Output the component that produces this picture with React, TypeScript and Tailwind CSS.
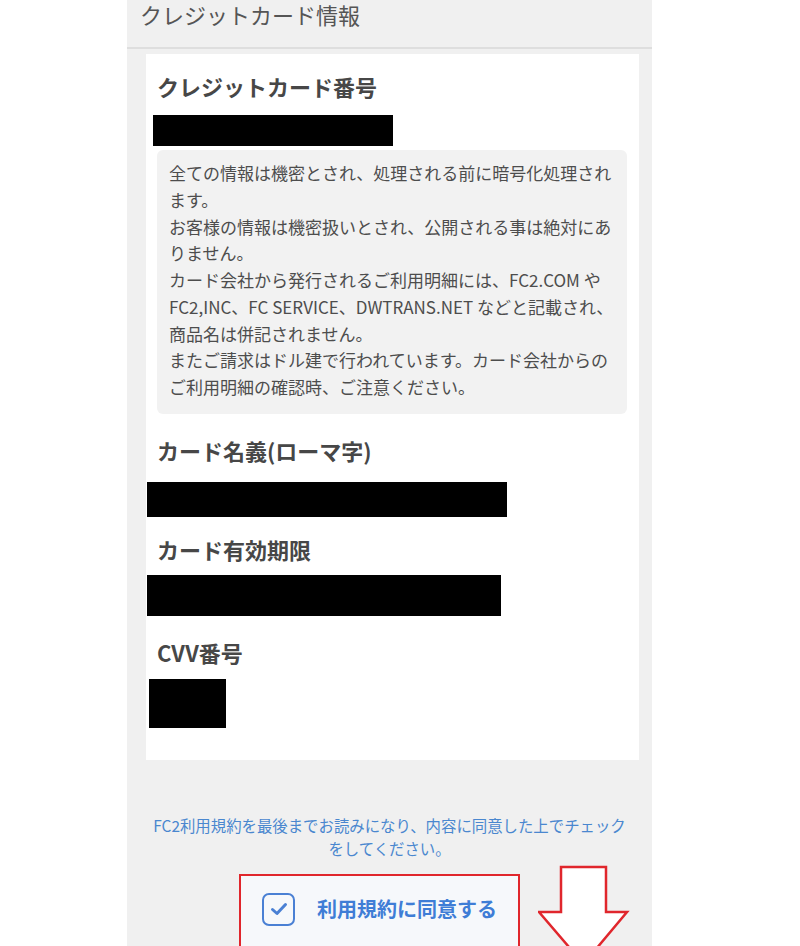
import React from "react";

const FONT = { fontFamily: '"Noto Sans CJK JP", "Noto Sans", sans-serif' };

// redaction bar shown in place of entered card details
function Redacted({ className }: { className: string }) {
  return <div className={`bg-black ${className}`} />;
}

function FieldLabel({ children, className = "" }: { children: React.ReactNode; className?: string }) {
  return (
    <h3 className={`pl-[11px] text-[22px] font-bold leading-[30px] text-[#474747] ${className}`}>
      {children}
    </h3>
  );
}

export default function App() {
  return (
    <div className="relative h-[946px] overflow-hidden bg-white" style={FONT}>
      <div className="ml-[127px] h-full w-[525px] bg-[#f0f0f0]">
        {/* Section header */}
        <div className="h-[49px] border-b-2 border-[#dedede] pl-[13px] text-[22px] leading-[29px] text-[#555]">
          クレジットカード情報
        </div>

        {/* Card form */}
        <div className="ml-[19px] mt-[5px] w-[493px] bg-white pb-[32px] pt-[17px]">
          <FieldLabel>クレジットカード番号</FieldLabel>
          <Redacted className="ml-[7px] mt-[14px] h-[31px] w-[240px]" />

          <div className="ml-[11px] mt-[4px] w-[470px] rounded-md bg-[#f2f2f2] pb-[13px] pl-[12px] pr-[8px] pt-[10px] text-[17px] leading-[26.75px] text-[#4d4d4d]">
            全ての情報は機密とされ、処理される前に暗号化処理されます。
            <br />
            お客様の情報は機密扱いとされ、公開される事は絶対にありません。
            <br />
            カード会社から発行されるご利用明細には、FC2.COM や FC2,INC、FC SERVICE、DWTRANS.NET などと記載され、商品名は併記されません。
            <br />
            またご請求はドル建で行われています。カード会社からのご利用明細の確認時、ご注意ください。
          </div>

          <FieldLabel className="mt-[21px]">カード名義(ローマ字)</FieldLabel>
          <Redacted className="ml-[1px] mt-[17px] h-[35px] w-[360px]" />

          <FieldLabel className="mt-[17px]">カード有効期限</FieldLabel>
          <Redacted className="ml-[1px] mt-[11px] h-[41px] w-[354px]" />

          <FieldLabel className="mt-[21px]">CVV番号</FieldLabel>
          <Redacted className="ml-[3px] mt-[12px] h-[49px] w-[77px]" />
        </div>

        {/* Terms agreement */}
        <p className="mt-[54px] px-[14px] text-center text-[15.4px] leading-[23px] text-[#4a87cf]">
          FC2利用規約を最後までお読みになり、内容に同意した上でチェック
          <br />
          をしてください。
        </p>

        <button className="ml-[112px] mt-[14px] flex h-[80px] w-[281px] items-start border-2 border-[#e0262c] bg-[#f6f8fb] pl-[21px] pt-[17px]">
          <span className="flex h-[33px] w-[33px] items-center justify-center rounded-[7px] border-2 border-[#4a80d4]">
            <svg width="18" height="14" viewBox="0 0 18 14" fill="none">
              <path d="M2.5 7.5 L7 11.5 L15.5 2.5" stroke="#4a80d4" strokeWidth="3" strokeLinecap="round" strokeLinejoin="round" />
            </svg>
          </span>
          <span className="ml-[22px] text-[20px] font-bold leading-[31px] text-[#3f7dd6]">利用規約に同意する</span>
        </button>
      </div>

      {/* Annotation arrow */}
      <svg className="absolute left-[538px] top-[864px]" width="92" height="104" viewBox="0 0 92 104">
        <path d="M23 3 H68 V48 H89 L45.5 100 L1 48 H23 Z" fill="white" stroke="#e0262c" strokeWidth="2.5" strokeLinejoin="miter" />
      </svg>
    </div>
  );
}
